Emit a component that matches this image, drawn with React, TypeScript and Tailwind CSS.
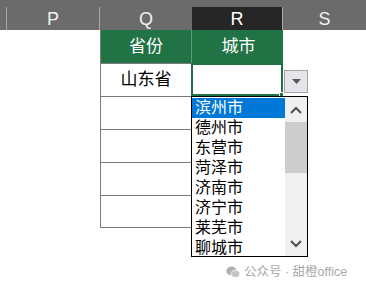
import React from "react";

const font = { fontFamily: '"Liberation Sans", "Noto Sans CJK SC", sans-serif' };

const cities = ["滨州市", "德州市", "东营市", "菏泽市", "济南市", "济宁市", "莱芜市", "聊城市"];

export default function App() {
  return (
    <div className="w-[366px] h-[292px] bg-white relative overflow-hidden" style={font}>
      {/* column header */}
      <div className="h-[30px] bg-[#6b6b6b] pt-[7px] flex text-[#f0f0f0] text-[18px] leading-[23px]">
        <div className="w-[7px] border-r border-[#a8a8a8]" />
        <div className="w-[93px] border-r border-[#a8a8a8] flex items-center justify-center pt-[2px]">P</div>
        <div className="w-[92px] flex items-center justify-center pt-[2px]">Q</div>
        <div className="w-[91px] bg-[#262626] border-r border-[#a8a8a8] flex items-center justify-center pt-[2px] text-white">R</div>
        <div className="flex-1 flex items-center justify-center pt-[2px]">S</div>
      </div>

      {/* grid body */}
      <div className="flex">
        <div className="w-[100px]" />
        <div className="flex flex-col">
          {/* green header row */}
          <div className="flex h-[33px]">
            <div className="w-[91px] bg-[#217346] border-l border-[#7a7a7a] flex items-center justify-center text-white text-[17px]">省份</div>
            <div className="w-[92px] bg-[#217346] border-l border-[#5a9a76] flex items-center justify-center text-white text-[17px] pl-[2px]">城市</div>
          </div>
          {/* row with value */}
          <div className="flex h-[33px]">
            <div className="w-[91px] border-l border-t border-[#7a7a7a] flex items-center justify-center text-black text-[17px]">山东省</div>
            <div className="w-[92px] border-2 border-[#217346] bg-white relative">
              <div className="absolute right-[-3px] bottom-[-3px] w-[5px] h-[5px] bg-[#217346] border border-white" />
            </div>
          </div>
          {[0, 1, 2, 3].map((i) => (
            <div key={i} className="flex h-[33px]">
              <div className={`w-[91px] border-l border-t border-[#7a7a7a] ${i === 3 ? "border-b" : ""}`} />
            </div>
          ))}
        </div>
      </div>

      {/* dropdown button */}
      <div className="absolute left-[284px] top-[70px] w-[24px] h-[23px] bg-[#e4e4ea] border border-[#a6a6a6] flex items-center justify-center">
        <svg width="9" height="5" viewBox="0 0 9 5"><path d="M0 0h9L4.5 5z" fill="#5a5a5a" /></svg>
      </div>

      {/* list box */}
      <div className="absolute left-[191px] top-[96px] w-[117px] h-[161px] bg-white border border-black flex">
        <div className="flex-1 flex flex-col pt-[1px]">
          {cities.map((c, i) => (
            <div
              key={c}
              className={`h-[20px] pl-[3px] text-[16px] leading-[20px] ${i === 0 ? "bg-[#0078d7] text-white" : "text-black"}`}
            >
              {c}
            </div>
          ))}
        </div>
        <div className="w-[22px] bg-[#f0f0f0] flex flex-col items-center">
          <div className="h-[25px] flex items-center justify-center">
            <svg width="12" height="8" viewBox="0 0 12 8"><path d="M1 7L6 2l5 5" stroke="#505050" strokeWidth="2" fill="none" /></svg>
          </div>
          <div className="w-[22px] h-[51px] bg-[#cdcdcd]" />
          <div className="flex-1" />
          <div className="h-[25px] flex items-center justify-center">
            <svg width="12" height="8" viewBox="0 0 12 8"><path d="M1 1l5 5 5-5" stroke="#505050" strokeWidth="2" fill="none" /></svg>
          </div>
        </div>
      </div>

      {/* watermark */}
      <div className="absolute left-[226px] top-[263px] flex items-center gap-[4px] text-[#a8a8a8] text-[12.5px]">
        <svg width="14" height="12" viewBox="0 0 14 12">
          <ellipse cx="5.5" cy="5" rx="5.2" ry="4.4" fill="#b0b0b0" />
          <ellipse cx="9.5" cy="7.8" rx="4.3" ry="3.6" fill="#c4c4c4" stroke="#fff" strokeWidth="0.8" />
        </svg>
        <span>公众号 · 甜橙office</span>
      </div>
    </div>
  );
}
